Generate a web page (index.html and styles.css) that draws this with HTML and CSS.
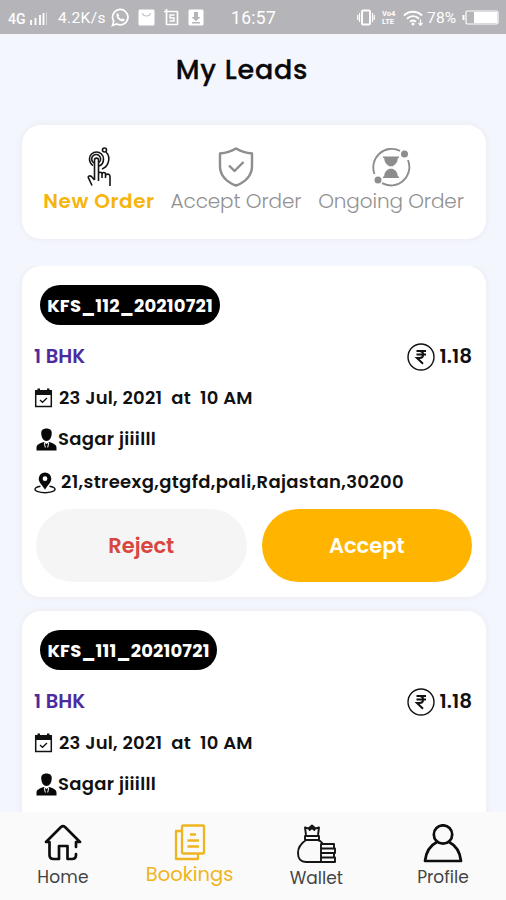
FILE: index.html
```html
<!DOCTYPE html>
<html lang="en">
<head>
<meta charset="utf-8">
<title>My Leads</title>
<link rel="stylesheet" href="styles.css">
</head>
<body>
<svg width="0" height="0" class="defs">
  <symbol id="rupee" viewBox="0 0 28 28"><circle cx="14" cy="14" r="13" fill="none" stroke="#111" stroke-width="1.4"/><path d="M9.500 8h9.500M9.500 11.500h9.500M10 8h2.500c4.800 0 4.800 7 0 7H10l6 5.700" fill="none" stroke="#111" stroke-width="2"/></symbol>
  <symbol id="calendar" viewBox="0 0 18 20"><path d="M1.200 3.500h15.600v15H1.200z" fill="none" stroke="#111" stroke-width="1.500"/><path d="M.5 2h17v5H.5zM3 .5h2.500v3H3zM12.500.5H15v3h-2.500z" fill="#111"/><path d="M5.500 12l2.500 2.300 4.500-4.300" fill="none" stroke="#111" stroke-width="1.300"/></symbol>
  <symbol id="agent" viewBox="0 0 21 23"><path d="M10.500.5c3.800 0 5.700 2.200 5.200 5.500-.3 4-2.200 7-5.200 7s-4.900-3-5.200-7c-.5-3.300 1.400-5.500 5.200-5.500z" fill="#080808"/><path d="M.5 22.500v-3c0-3 3.500-4 7-5.500l3 2 3-2c3.500 1.500 7 2.500 7 5.500v3z" fill="#080808"/><path d="M8.300 15l1 4.500M12.700 15l-1 4.500" stroke="#fff" stroke-width="1"/></symbol>
  <symbol id="pin" viewBox="0 0 22 22"><path d="M6.500 14.300C3.300 14.800 1 15.900 1 17.200c0 2 4.500 3.500 10 3.500s10-1.500 10-3.500c0-1.300-2.300-2.400-5.500-2.900" fill="none" stroke="#111" stroke-width="1.400"/><path fill-rule="evenodd" d="M11 .5a6.300 6.300 0 0 1 6.300 6.300c0 4-4.300 7-6.300 11-2-4-6.300-7-6.300-11A6.300 6.300 0 0 1 11 .5zm0 3.800a2.400 2.400 0 1 0 0 4.800 2.400 2.400 0 0 0 0-4.800z" fill="#080808"/></symbol>
</svg>
<div class="screen">
  <header class="status">
    <span class="net">4G</span>
    <svg class="signal" width="18" height="16" viewBox="0 0 18 16"><path d="M2 15v-5M6.500 15V8M11 15V5M14.500 15V3" stroke="#fff" stroke-width="1.800"/><path d="M17.500 15V2" stroke="#d5d5d7" stroke-width="1"/></svg>
    <span class="speed">4.2K/s</span>
    <svg class="wa" width="19" height="19" viewBox="0 0 19 19"><path d="M1.500 17.500l1.200-4.300A7.700 7.700 0 1 1 5.700 16z" fill="none" stroke="#fff" stroke-width="1.700"/><path d="M6.500 5l1.800 2.200-.8 1.300c.8 1.400 1.700 2 3 2.700l1.200-1 2 1.300c-.3 1.500-1.500 2.200-3 1.800C8 12.500 6 10.500 5.500 8c-.2-1.300.2-2.500 1-3z" fill="#fff"/></svg>
    <svg class="bag" width="17" height="17" viewBox="0 0 17 17"><rect x=".5" y=".5" width="16" height="16" rx="1.500" fill="#fff"/><path d="M4.500 4c.5 4 7.500 4 8 0" fill="none" stroke="#c4c4c7" stroke-width="1.200"/></svg>
    <svg class="scr" width="15" height="17" viewBox="0 0 15 17"><path d="M0 2.500h14M2.500 0v15.500h11V2.500" fill="none" stroke="#fff" stroke-width="1.700"/><path d="M10.500 6H6v3h4v3H5.500" fill="none" stroke="#fff" stroke-width="1.400"/></svg>
    <svg class="dl" width="16" height="17" viewBox="0 0 16 17"><rect x=".5" y=".5" width="15" height="16" rx="1.500" fill="#fff"/><path d="M6 3h4v5h2.500L8 12.200 3.500 8H6zM4 13h8v1.400H4z" fill="#b5b5b8"/></svg>
    <span class="clock">16:57</span>
    <svg class="vib" width="18" height="17" viewBox="0 0 18 17"><rect x="5" y="1.500" width="8" height="14" rx="1" fill="none" stroke="#fff" stroke-width="1.900"/><path d="M2.500 4v9M15.500 4v9M.7 6v5M17.300 6v5" stroke="#fff" stroke-width="1.200"/></svg>
    <span class="lte"><span>Vo4</span><span>LTE</span></span>
    <svg class="wifi" width="20" height="16" viewBox="0 0 20 16"><path d="M1 5.500c5-5 13-5 18 0M4 8.700c3.500-3.400 8.500-3.400 12 0M7 11.800c2-1.800 4-1.800 6 0" fill="none" stroke="#fff" stroke-width="1.900"/><circle cx="10" cy="14" r="1.500" fill="#fff"/><path d="M17.500 9.500v6M15.500 13l2 2.300 2-2.300" stroke="#fff" stroke-width="1.200" fill="none"/></svg>
    <span class="pct">78%</span>
    <svg class="bat" width="37" height="15" viewBox="0 0 37 15"><path d="M1.500 5v5" stroke="#fff" stroke-width="2"/><rect x="4" y="1" width="32" height="13" rx="1.500" fill="none" stroke="#fff" stroke-width="1.200"/><path d="M12 2h23v11H12z" fill="#fff"/></svg>
  </header>
  <h1 class="title">My Leads</h1>

  <nav class="tabs">
    <div class="tab active">
      <svg width="26" height="40" viewBox="0 0 26 40" fill="none" stroke="#151515" stroke-width="1.600"><circle cx="18.500" cy="3" r="2"/><path d="M20 5c3 3 3.500 7 2 11-1 3-3.500 5-6 6M13 19c3-1 4.500-3.500 4.500-7A7 7 0 0 0 3.500 12c0 3 1.300 5 3.500 6.500M8 16a4.500 4.500 0 1 1 5-.5"/><path d="M8.500 33V13c0-2.500 4-2.500 4 0v21M12.500 27c0-2.300 3.500-2.300 3.500 0v4M16 27c0-2 3.500-2 3.500 0v4M19.500 28c2-1.500 4.500-1 4.500 1.500V39M8.500 33l-3-3.500c-2-1.500-4 0-3 1.500L6 38.500"/></svg>
      <span>New Order</span>
    </div>
    <div class="tab accept">
      <svg width="36" height="40" viewBox="0 0 36 40" fill="none" stroke="#8d8d8d" stroke-width="2.400" stroke-linejoin="round"><path d="M18 1.500c5 3 10 4.500 16 5v13c0 9-7 16-16 19C9 35.500 2 28.500 2 19.500v-13c6-.5 11-2 16-5z"/><path d="M11 18.500l5.500 5.500 9-9"/></svg>
      <span>Accept Order</span>
    </div>
    <div class="tab ongoing">
      <svg width="40" height="40" viewBox="0 0 40 40"><path d="M3.500 27A18.500 18.500 0 0 1 29 3.800M37 13A18.500 18.500 0 0 1 11 36.200" fill="none" stroke="#8d8d8d" stroke-width="1.900"/><circle cx="33.500" cy="7" r="3.500" fill="#8d8d8d"/><circle cx="7" cy="33" r="3.500" fill="#8d8d8d"/><path d="M12 9.500h16v1.500h-1.200c0 4.500-2.800 7-5.300 8.200h-3c-2.500-1.200-5.300-3.700-5.300-8.200H12zM12 31h16v-1.500h-1.200c0-4.500-2.800-6.500-5.300-7.700h-3c-2.500 1.200-5.300 3.200-5.300 7.700H12z" fill="#8d8d8d"/></svg>
      <span>Ongoing Order</span>
    </div>
  </nav>

  <main class="leads">
    <article class="lead">
      <div class="badge">KFS_112_20210721</div>
      <div class="row top"><b class="kind">1 BHK</b><span class="price"><svg width="28" height="28"><use href="#rupee"/></svg><b>1.18</b></span></div>
      <div class="row date"><svg width="19" height="20"><use href="#calendar"/></svg><span class="when">23 Jul, 2021&nbsp; at&nbsp; 10 AM</span></div>
      <div class="row person"><svg width="21" height="23"><use href="#agent"/></svg><span class="who">Sagar jiiilll</span></div>
      <div class="row place"><svg width="22" height="22"><use href="#pin"/></svg><span class="addr">21,streexg,gtgfd,pali,Rajastan,30200</span></div>
      <div class="actions"><button class="reject">Reject</button><button class="confirm">Accept</button></div>
    </article>
    <article class="lead">
      <div class="badge second">KFS_111_20210721</div>
      <div class="row top"><b class="kind">1 BHK</b><span class="price"><svg width="28" height="28"><use href="#rupee"/></svg><b>1.18</b></span></div>
      <div class="row date"><svg width="19" height="20"><use href="#calendar"/></svg><span class="when">23 Jul, 2021&nbsp; at&nbsp; 10 AM</span></div>
      <div class="row person"><svg width="21" height="23"><use href="#agent"/></svg><span class="who">Sagar jiiilll</span></div>
    </article>
  </main>

  <footer class="bottom">
    <div class="item home">
      <svg width="38" height="37" viewBox="0 0 38 37" fill="none" stroke="#0d0d0d" stroke-width="2.700" stroke-linecap="round" stroke-linejoin="round"><path d="M5 18H2L17 3q2-1.700 4 0l15 15h-4v5M5.500 18v13q0 4 4 4H15V22h8.500v13H28q4 0 4-4v-1"/></svg>
      <span>Home</span>
    </div>
    <div class="item bookings">
      <svg width="32" height="37" viewBox="0 0 32 37" fill="none" stroke="#efb520" stroke-width="2.300" stroke-linejoin="round"><rect x="8" y="1.500" width="22" height="28" rx="1"/><path d="M8 7H2v28h22v-5M16 10.500h6M13.500 16.500H25M13.500 22.500H25"/></svg>
      <span>Bookings</span>
    </div>
    <div class="item wallet">
      <svg width="40" height="40" viewBox="0 0 40 40" fill="none" stroke="#151515" stroke-width="1.900" stroke-linejoin="round"><path d="M10 11L9 3.500l3.500 1L16 1.500l3.500 3 3.500-1-1 7.500M13 6.500L16 4l3 2.500M9 12h14v4H9zM10 16C4 20 2 24 2 29c0 6 3 9 8 9h15M22 16c3 1 4 2.500 5 4"/><path d="M25 20h13v4.500H25zM25 24.500h14V29H25zM25 29h13v4.500H25zM25 33.500h14V38H25z"/></svg>
      <span>Wallet</span>
    </div>
    <div class="item profile">
      <svg width="40" height="39" viewBox="0 0 40 39" fill="none" stroke="#0d0d0d" stroke-width="2.700" stroke-linejoin="round"><circle cx="20" cy="10.500" r="9.200"/><path d="M14 18C7 21.500 3 28 2 37h36c-1-9-5-15.500-12-19"/></svg>
      <span>Profile</span>
    </div>
  </footer>
</div>
</body>
</html>
```
FILE: styles.css
```css
* { box-sizing: border-box; }
body { margin: 0; font-family: Poppins, Inter, "Open Sans", sans-serif; color: #111; }
svg { display: block; flex: none; }
.defs { position: absolute; }
.screen { width: 506px; height: 900px; overflow: hidden; display: flex; flex-direction: column; background: #f4f6fe; }

.status { height: 34px; flex: none; display: flex; align-items: center; padding: 1px 7px 0 8px; background: #b5b5b9; color: #fff; font: 16px/20px Roboto, sans-serif; white-space: nowrap; }
.net { width: 19px; font-weight: 500; font-size: 14px; padding-top: 3px; }
.signal { margin-left: 2px; }
.speed { width: 48px; margin-left: 11px; font-size: 15.500px; letter-spacing: .35px; }
.wa { margin-left: 5px; }
.bag { margin-left: 8px; }
.scr { margin-left: 9px; }
.dl { margin-left: 9px; }
.clock { margin-left: 27px; width: 46px; font-size: 17.500px; letter-spacing: .3px; }
.vib { margin-left: auto; }
.lte { display: flex; flex-direction: column; width: 15px; margin-left: 7px; font: bold 7.500px/8px Roboto, sans-serif; }
.wifi { margin-left: 6px; }
.pct { width: 30px; margin-left: 4px; font-size: 15.500px; letter-spacing: .2px; }
.bat { margin-left: 5px; }

.title { flex: none; height: 70px; margin: 0; padding-right: 22px; text-align: center; font-size: 27px; line-height: 71px; font-weight: 500; letter-spacing: .8px; color: #0a0a0a; -webkit-text-stroke: .3px #0a0a0a; }

.tabs { flex: none; display: flex; align-items: flex-start; gap: 16px; height: 114px; margin: 21px 20px 27px 22px; padding: 22px 21px 0; background: #fff; border-radius: 19px; box-shadow: 0 0 5px 2px #eeeef4; }
.tab { display: flex; flex-direction: column; align-items: center; width: 112px; color: #929292; font-size: 20px; font-weight: 300; line-height: 28px; letter-spacing: -.12px; white-space: nowrap; }
.tab.active { color: #f6b50b; font-weight: 600; letter-spacing: .55px; }
.accept { width: 130px; }
.ongoing { width: 146px; margin-left: 1px; }

.leads { flex: none; height: 546px; overflow: hidden; display: flex; flex-direction: column; gap: 14px; padding: 0 20px 0 22px; }
.lead { flex: none; height: 331px; padding: 19px 14px 0 13px; background: #fff; border-radius: 19px; box-shadow: 0 0 5px 2px #efeff4; }
.badge { display: flex; align-items: center; justify-content: center; width: 180px; height: 40px; margin-left: 5px; border-radius: 20px; background: #000; color: #fff; font-size: 18px; font-weight: 700; letter-spacing: .18px; white-space: nowrap; }
.badge.second { width: 177px; }
.row { display: flex; align-items: center; height: 42px; font-size: 18px; font-weight: 600; white-space: nowrap; }
.row span { line-height: 26px; padding-bottom: 1px; }
.top { justify-content: space-between; margin-top: 11px; }
.kind { margin-left: -1px; padding-bottom: 2px; color: #4c2ba0; font-size: 19.500px; font-weight: 600; }
.row .price { display: flex; align-items: center; gap: 4px; padding: 0; font-size: 20px; }
.price b { font-weight: 600; padding-bottom: 2px; }
.date { height: 40px; }
.date svg { margin-left: -1px; }
.date span { margin-left: 6px; letter-spacing: .25px; }
.person { height: 43px; padding-left: 1px; }
.person span { margin-left: 1px; letter-spacing: .3px; }
.place { height: 43px; }
.place svg { margin-left: -1px; }
.place span { margin-left: 5px; letter-spacing: .36px; }
.actions { display: flex; gap: 15px; padding-left: 1px; margin-top: 5px; }
.actions button { flex: 1; height: 73px; padding: 0; border: 0; border-radius: 37px; font: 600 21px Poppins, Inter, sans-serif; }
.reject { background: #f5f5f5; color: #d8463f; }
.actions .confirm { background: #ffb400; color: #fffdf5; }

.bottom { flex: 1; display: flex; justify-content: space-between; padding: 12px 0 0; background: #fafafa; }
.item { display: flex; flex-direction: column; align-items: center; width: 126px; color: #444; font-size: 17px; font-weight: 400; line-height: 28px; }
.home span { padding-top: 2px; letter-spacing: .2px; }
.bookings { color: #efb520; font-size: 19.500px; }
```
